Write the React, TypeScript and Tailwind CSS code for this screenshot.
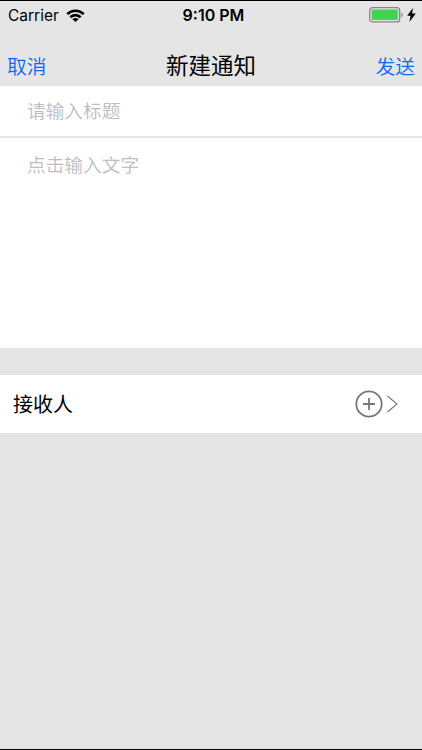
import { ReactNode } from "react";
import clsx from "clsx";

function WifiIcon() {
  return (
    <svg width="19" height="13" viewBox="0 0 19 13" fill="#000">
      <path d="M0.3 4.2a13 13 0 0 1 18.4 0L16.8 6.1a10.3 10.3 0 0 0-14.6 0Z" />
      <path d="M3.4 7.3a8.6 8.6 0 0 1 12.2 0L13.7 9.2a5.9 5.9 0 0 0-8.4 0Z" />
      <path d="M9.5 13 6.4 10.2a4.4 4.4 0 0 1 6.2 0Z" />
    </svg>
  );
}

function BatteryIcon() {
  return (
    <svg width="35" height="16" viewBox="0 0 35 16" fill="none">
      <rect x="0.7" y="0.7" width="30" height="14.2" rx="3" stroke="#858585" strokeWidth="1.3" />
      <rect x="2.6" y="2.6" width="26.2" height="10.4" rx="1" fill="#42d451" />
      <path d="M32.4 5.4c1.9.7 1.9 4.1 0 4.8Z" fill="#858585" />
    </svg>
  );
}

function BoltIcon() {
  return (
    <svg width="9" height="14" viewBox="0 0 9 14" fill="#000">
      <path d="M5.8 0 0.2 7.8h3.4L2.4 14 8.8 5.6H5.2Z" />
    </svg>
  );
}

function PlusCircleIcon() {
  return (
    <svg width="28" height="28" viewBox="0 0 28 28" fill="none" stroke="#777" strokeWidth="1.8">
      <circle cx="14" cy="14" r="12.7" />
      <path d="M14 8v12M8 14h12" />
    </svg>
  );
}

function ChevronIcon() {
  return (
    <svg width="11" height="18" viewBox="0 0 11 18" fill="none" stroke="#777" strokeWidth="1.1">
      <path d="M0.5 1 10 9 0.5 17" />
    </svg>
  );
}

function StatusBar() {
  return (
    <div className="grid h-7 grid-cols-3 items-center pl-2 pr-1.5 font-['Inter','Liberation_Sans',sans-serif] text-black">
      <div className="flex items-center gap-[7px]">
        <span className="pt-px text-[15.5px] leading-none">Carrier</span>
        <WifiIcon />
      </div>
      <span className="pl-[3px] text-center text-[16px] font-semibold leading-none">9:10 PM</span>
      <div className="flex items-center justify-end gap-[3px]">
        <BatteryIcon />
        <BoltIcon />
      </div>
    </div>
  );
}

function NavButton({ children, className }: { children: ReactNode; className?: string }) {
  return (
    <button className={clsx("pt-0.5 text-[19.7px] font-[350] leading-none text-[#0b66f5]", className)}>
      {children}
    </button>
  );
}

export default function App() {
  return (
    <div className="flex h-[750px] w-full flex-col border-y border-black bg-[#e5e5e5] font-['Noto_Sans_CJK_SC',sans-serif]">
      <StatusBar />
      <header className="grid h-[57px] grid-cols-3 items-center px-[7px] pt-3.5">
        <NavButton className="text-left">取消</NavButton>
        <h1 className="text-center text-[22.5px] leading-none text-black">新建通知</h1>
        <NavButton className="text-right">发送</NavButton>
      </header>

      <section className="h-[262px] bg-white">
        <input
          aria-label="标题"
          placeholder="请输入标题"
          className="block h-[52px] w-full border-b-2 border-[#e5e5e5] px-[27px] pb-[3px] text-[18.7px] font-[350] outline-none placeholder:text-[#bdbdc3]"
        />
        <textarea
          aria-label="内容"
          placeholder="点击输入文字"
          className="block h-[210px] w-full resize-none px-[27px] pt-3 text-[18.7px] font-[350] leading-7 outline-none placeholder:text-[#bdbdc3]"
        />
      </section>

      <button className="mt-[27px] flex h-[58px] items-center bg-white pl-[13px] pr-6">
        <span className="text-[20px] leading-none text-black">接收人</span>
        <span className="ml-auto flex items-center gap-1">
          <PlusCircleIcon />
          <ChevronIcon />
        </span>
      </button>
    </div>
  );
}
